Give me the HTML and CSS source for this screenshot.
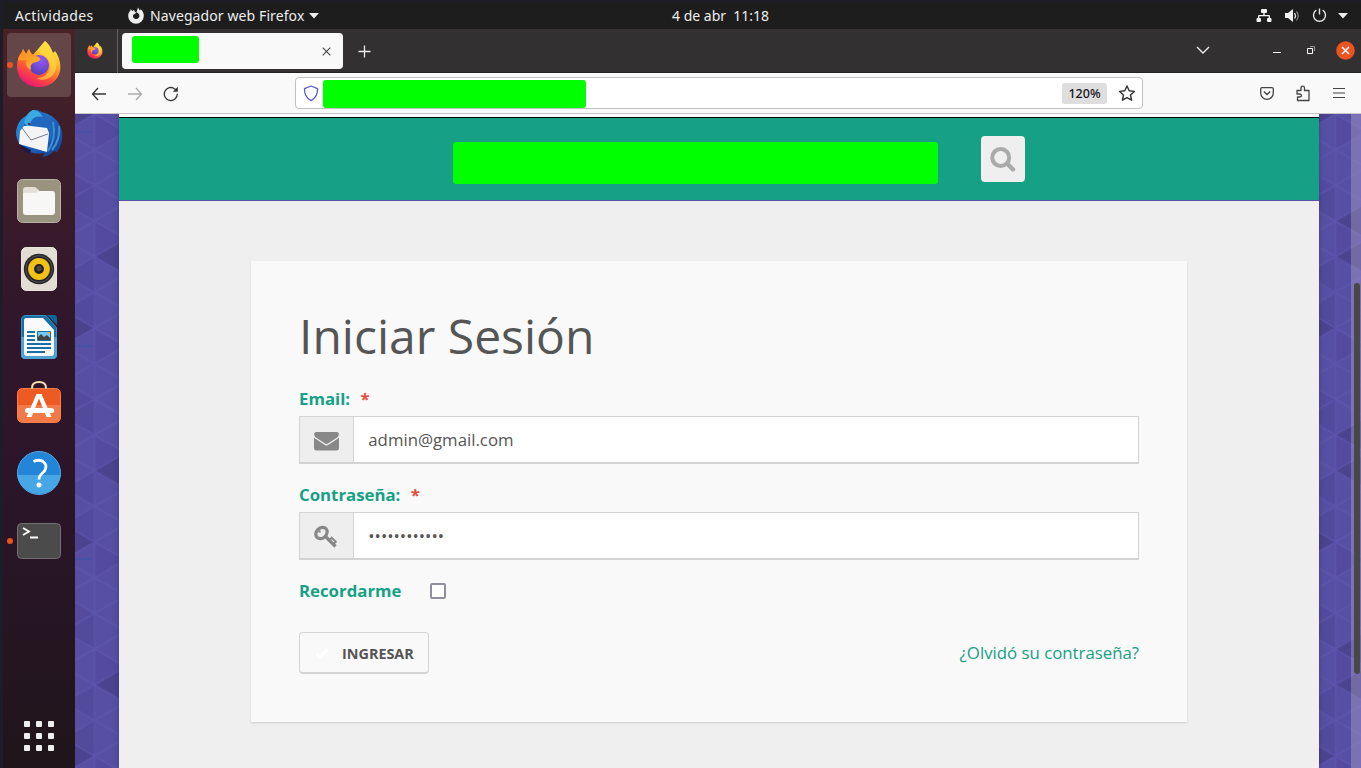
FILE: index.html
```html
<!DOCTYPE html>
<html lang="es">
<head>
<meta charset="utf-8">
<title>Iniciar Sesión</title>
<link rel="stylesheet" href="styles.css">
</head>
<body>
<svg class="defs" width="0" height="0">
  <defs>
    <linearGradient id="ff" x1=".75" y1="0" x2=".25" y2="1"><stop offset="0" stop-color="#fff24a"/><stop offset=".35" stop-color="#ffb42a"/><stop offset=".68" stop-color="#ff5038"/><stop offset="1" stop-color="#e7107c"/></linearGradient>
    <radialGradient id="globe" cx=".6" cy=".25" r=".8"><stop offset="0" stop-color="#9659f5"/><stop offset="1" stop-color="#5140b8"/></radialGradient>
    <linearGradient id="flame" x1="0" y1="0" x2="1" y2="1"><stop offset="0" stop-color="#ff8a25"/><stop offset="1" stop-color="#ffb52b"/></linearGradient>
    <linearGradient id="tb" x1="0" y1="0" x2="1" y2="1"><stop offset="0" stop-color="#2c9ae0"/><stop offset=".55" stop-color="#1d62bd"/><stop offset="1" stop-color="#173b8c"/></linearGradient>
    <symbol id="firefox" viewBox="0 0 46 48">
      <path d="M29 1C34 5 35 9 37 13l2-2c5 7 6 14 5 20-2 10-11 16-21 16C10 47 1 38 1 26c0-6 2-10 5-14l1-3 3 5 3-5 3 7z" fill="url(#ff)"/>
      <path d="M29 1c6 5 7 10 9 15 4 9 2 16-2 20-4 4-11 5-15 2 8 0 14-6 13-14-1-6-7-10-12-12 1-4 4-8 7-11z" fill="#ffdc3f" opacity=".65"/>
      <circle cx="23" cy="25" r="10" fill="url(#globe)"/>
      <path d="M2 20c0-3 2-6 4-8l1-3 3 5 3-5c1 4 4 6 7 7 2 1 4 1 4 3 0 3-5 3-7 4-2 1-3 4-2 7-5-2-6-7-4-10-4 0-7 1-9 0z" fill="url(#flame)"/>
    </symbol>
    <pattern id="grid" width="62" height="35.67" patternUnits="userSpaceOnUse">
      <path d="M31 0v35.670M0 17.830L31 0l31 17.830L31 35.670z" fill="none" stroke="#6056b3" stroke-width="1.500" opacity=".65"/>
    </pattern>
    <pattern id="tiles" width="62" height="214" patternUnits="userSpaceOnUse">
      <rect width="62" height="214" fill="#574fa3"/>
      <path d="M31 71.300L0 89.200l31 17.800zM31 142.700L0 160.500l31 17.800zM31 178.300L0 196.200 31 214z" fill="#524a9c"/>
      <path d="M31 107l31 17.800-31 17.900zM31 0l31 17.800L31 35.700zM0 53.500v35.700l31-17.900z" fill="#544ba0"/>
      <path d="M31 142.700L62 124.800v35.700zM31 0L0 17.800V0zM31 214L0 196.200V214z" fill="#4b438f"/>
    </pattern>
  </defs>
</svg>
<div class="desktop">
  <header class="topbar">
    <span class="activities">Actividades</span>
    <svg class="appmark" width="16" height="17" viewBox="0 0 16 17"><path d="M10 .5l1.800 3 1-1.300C15 4 16 6.500 15.800 9A7.800 7.800 0 0 1 .2 9c0-2.600.8-4 2-5l.5-2 1.500 2L6 3l1 2 1.500.5C8 7 5.500 6.500 5 8.500 4.700 11 6.500 12 8 12c2.500 0 3.800-2 3.300-4C10.800 6.500 9.500 6 8.500 5z" fill="#eee"/></svg>
    <span class="appname">Navegador web Firefox</span>
    <svg class="caret" width="10" height="6"><path d="M0 0h10L5 5.500z" fill="#eee"/></svg>
    <span class="clock">4 de abr&nbsp; 11:18</span>
    <div class="tray">
      <svg width="16" height="14" viewBox="0 0 16 14"><path d="M6 0h4q1 0 1 1v2q0 1-1 1H8.700v2H13q1 0 1 1v2h.5q1 0 1 1v2q0 1-1 1H12q-1 0-1-1v-2q0-1 1-1h.7V7.300H3.300V9H4q1 0 1 1v2q0 1-1 1H1.500q-1 0-1-1v-2q0-1 1-1H2V7q0-1 1-1h4.300V4H6Q5 4 5 3V1q0-1 1-1z" fill="#f2f2f2"/></svg>
      <svg width="16" height="14" viewBox="0 0 16 14"><path d="M0 4h3l5-4v13L3 9H0z" fill="#f2f2f2"/><path d="M9.500 4q2 3 0 5.500" fill="none" stroke="#ddd" stroke-width="1.300"/><path d="M11.500 2.500q3.500 4.200 0 9" fill="none" stroke="#888" stroke-width="1.200"/></svg>
      <svg width="15" height="15" viewBox="0 0 15 15"><path d="M4.300 2.200a6 6 0 1 0 6.400 0M7.500.5v6" fill="none" stroke="#e5e5e5" stroke-width="1.400"/></svg>
      <svg width="10" height="6"><path d="M0 0h10L5 5.500z" fill="#eee"/></svg>
    </div>
  </header>
  <div class="workspace">
    <nav class="dock">
      <div class="app selected"><i class="dot"></i><svg width="46" height="48"><use href="#firefox"/></svg></div>
      <div class="app mail"><svg width="48" height="48" viewBox="0 0 48 48"><path d="M18 0c5 0 7 1 8 2 11 2 19 9 21 20 1 8-1 15-5 20l-3-1c-3 3-6 5-12 6l3-4C14 46 2 37 1 24 1 14 7 7 13 5c1-2 3-4 5-5z" fill="url(#tb)"/><path d="M18 0c8 0 14 5 17 10 5 8 3 18-2 23L9 17c0-9 4-14 9-17z" fill="#1f68bd"/><path d="M18 0c-5 2-8 7-9 13l5 5c2-7 3-13 14-11-3-5-6-7-10-7z" fill="#3ba9e2"/><path d="M5 21l4-5 7 0 16 2 2 5-2 19L4 34z" fill="#f4f4f7"/><path d="M7 18l9 12 17-6" fill="none" stroke="#777b8c"/><path d="M4 34l12 6-1 4C10 42 6 38 4 34z" fill="#201846"/><path d="M38 12c2 9 1 20-5 29M44 16c1 9-2 18-7 24" stroke="#3a92d5" stroke-width="2" fill="none"/><circle cx="14" cy="14" r="1.200" fill="#6e2d33"/></svg></div>
      <div class="app"><svg width="46" height="46" viewBox="0 0 46 46"><rect x="1.500" y="1.500" width="43" height="43" rx="5" fill="#999380" stroke="#b6b2a4"/><path d="M7 12q0-3 3-3h9l4 3v8H7z" fill="#e4e0d6"/><path d="M7 15h13l3-2h13q3 0 3 3v18q0 3-3 3H10q-3 0-3-3z" fill="#f7f7f6"/></svg></div>
      <div class="app"><svg width="36" height="44" viewBox="0 0 38 46" preserveAspectRatio="none"><rect x=".5" y=".5" width="37" height="45" rx="5" fill="#e3ded4" stroke="#f0ece3"/><circle cx="19" cy="23" r="16" fill="#252529"/><circle cx="19" cy="23" r="14" fill="none" stroke="#55555c"/><circle cx="19" cy="23" r="11.500" fill="#f2c118"/><circle cx="19" cy="23" r="5.200" fill="#202022"/><circle cx="19" cy="22.500" r="2.800" fill="#46464a"/></svg></div>
      <div class="app"><svg width="38" height="46" viewBox="0 0 38 46"><path d="M6 1.500h20l10.500 12V40q0 4.500-4 4.500H6q-4.500 0-4.500-4.500V6q0-4.500 4.500-4.500z" fill="#176fa6" stroke="#3b91c2"/><path d="M1 23h36v18q0 4-4 4H5q-4 0-4-4z" fill="#4ea3d4"/><path d="M27 1h7q3 0 3 3v7z" fill="#086798"/><path d="M6 4h17l11 12v23q0 3-3 3H7q-3 0-3-3V7q0-3 2-3z" fill="#fafafa"/><path d="M7 18h8M7 22h8M7 26h8M7 30h24M7 34h24M7 38h18" stroke="#176fa6" stroke-width="2"/><path d="M17.500 17.500h13v9h-13z" fill="#76c8f5" stroke="#176fa6"/><path d="M18 26v-3l3-3 3 3 3-2 3 3v2z" fill="#444"/><path d="M28 18h2v3z" fill="#ffb321"/></svg></div>
      <div class="app store"><svg width="46" height="44" viewBox="0 0 46 44"><rect x="1.500" y="8.500" width="43" height="34" rx="5" fill="#ed5b22" stroke="#fb7f4a"/><path d="M2 25h42v13q0 4-4 4H6q-4 0-4-4z" fill="#f17a47"/><path d="M16 9V8q0-6 7-6t7 6v1" fill="none" stroke="#f5dcae" stroke-width="2"/><path d="M20.500 14h5l10 23h-5L23 18.500 15.500 37h-5z" fill="#fff"/><rect x="9" y="28" width="29" height="5" rx="2.500" fill="#fff"/></svg></div>
      <div class="app"><svg width="46" height="46" viewBox="0 0 46 46"><circle cx="23" cy="23" r="21.500" fill="#2385d8" stroke="#50a9e8"/><path d="M1.200 25h43.600a22 22 0 0 1-43.600 0z" fill="#47a6e6"/><path d="M17.500 11.500q6-2.500 9.500 0 4 3 2.500 7.500-.8 2.500-3.500 4.500-3 2.300-3 6" fill="none" stroke="#fff" stroke-width="2.800"/><circle cx="23" cy="35" r="2.500" fill="#fff"/></svg></div>
      <div class="app"><i class="dot"></i><svg width="46" height="38" viewBox="0 0 46 38"><rect x="1.500" y="1.500" width="43" height="35" rx="4" fill="#4b4b4b" stroke="#717171"/><path d="M7 6l6 3.500L7 13M14 15.500h8" fill="none" stroke="#fff" stroke-width="1.800"/></svg></div>
      <div class="launcher"><i></i><i></i><i></i><i></i><i></i><i></i><i></i><i></i><i></i></div>
    </nav>
    <section class="browser">
      <div class="tabs">
        <div class="pinned"><svg width="16" height="17"><use href="#firefox"/></svg></div>
        <div class="tab"><b class="mask tab-mask"></b><svg width="9" height="9"><path d="M.7.7l7.600 7.600M8.300.7L.7 8.300" stroke="#444" stroke-width="1.100"/></svg></div>
        <svg class="newtab" width="13" height="13"><path d="M6.500.5v12M.5 6.500h12" stroke="#eee" stroke-width="1.300"/></svg>
        <div class="window-tools">
          <svg class="chev" width="14" height="9"><path d="M1 1l6 6 6-6" fill="none" stroke="#eee" stroke-width="1.400"/></svg>
          <svg class="min" width="8" height="2"><path d="M0 .5h8" stroke="#fff"/></svg>
          <svg class="max" width="9" height="9"><path d="M3 .5h4.500V5" fill="none" stroke="#999"/><path d="M.5 2.500h5v5h-5z" fill="none" stroke="#fff"/></svg>
          <svg width="19" height="19"><circle cx="9.500" cy="9.500" r="9.300" fill="#e95420"/><path d="M6 6l7 7M13 6l-7 7" stroke="#fff" stroke-width="1.500"/></svg>
        </div>
      </div>
      <div class="toolbar">
        <div class="navicons">
          <svg width="16" height="14"><path d="M15 7H1.500M7 1L1.500 7 7 13" fill="none" stroke="#333" stroke-width="1.300"/></svg>
          <svg width="16" height="14"><path d="M1 7h13.500M9 1l5.500 6L9 13" fill="none" stroke="#aaa" stroke-width="1.300"/></svg>
          <svg width="16" height="16"><path d="M14.300 7.800a6.500 6.500 0 1 1-2.500-4.900L13.500 4.300" fill="none" stroke="#333" stroke-width="1.300"/><path d="M14.800.7v5h-5z" fill="#333"/></svg>
        </div>
        <div class="address">
          <svg width="16" height="17"><path d="M8 1l6.500 2.600q.6 8-6.500 12Q.9 11.600 1.500 3.600z" fill="none" stroke="#5a5bd0" stroke-width="1.300" stroke-linejoin="round"/></svg>
          <b class="mask url-mask"></b>
          <span class="zoom">120%</span>
          <svg width="17" height="17" viewBox="0 0 17 17"><path d="M8 1l2.200 4.800 5.200.6-3.900 3.600 1.100 5.200L8 12.600l-4.600 2.600L4.500 10 .6 6.400l5.200-.6z" fill="none" stroke="#333" stroke-width="1.400" stroke-linejoin="round"/></svg>
        </div>
        <div class="menuicons">
          <svg width="14" height="13"><path d="M2 .7h10q1.300 0 1.300 1.300v4a6.300 6.300 0 0 1-12.600 0V2Q.7.7 2 .7zM3.800 4.500L7 7.500l3.200-3" fill="none" stroke="#444" stroke-width="1.300"/></svg>
          <svg width="15" height="17"><path d="M1 5.500h4V3q0-1.800 1.700-1.800T8.500 3v2.500H13v10H1.500V12h2q2-.3 2-1.500t-2-1.500H1z" fill="none" stroke="#444" stroke-width="1.300" stroke-linejoin="round"/></svg>
          <svg width="12" height="11"><path d="M0 .5h12M0 5h12M0 9.500h12" stroke="#444" stroke-width="1.200"/></svg>
        </div>
      </div>
      <div class="viewport">
        <div class="edge left"><svg width="44" height="654"><g transform="translate(-11.500 0)"><rect x="11" width="45" height="654" fill="url(#tiles)"/><rect x="11" width="45" height="654" fill="url(#grid)"/></g><path class="speck" d="M1 18h16M1 232h16M1 445h16"/></svg></div>
        <main class="page">
          <div class="strip"></div>
          <div class="banner"><b class="mask title-mask"></b><button class="search" aria-label="Buscar"><svg width="26" height="26"><circle cx="10.700" cy="10.500" r="8.500" fill="none" stroke="#aaa" stroke-width="4"/><path d="M17.500 17l5.500 5.500" stroke="#aaa" stroke-width="4.400" stroke-linecap="round"/></svg></button></div>
          <form class="card">
            <h1>Iniciar Sesión</h1>
            <label>Email: <em>*</em></label>
            <div class="field"><span class="addon"><svg width="25" height="19" viewBox="0 0 25 20" preserveAspectRatio="none"><path d="M2.500 0h20Q25 0 25 2.500 24.500 5 22 6.500l-8 5.500q-1.500 1-3 0L3 6.500Q.5 5 0 2.500 0 0 2.500 0z" fill="#888"/><path d="M0 6l10.500 7.500q2 1.400 4 0L25 6v11q0 2.500-2.500 2.500h-20Q0 19.500 0 17z" fill="#888"/></svg></span><span class="value">admin@gmail.com</span></div>
            <label>Contraseña: <em>*</em></label>
            <div class="field"><span class="addon"><svg width="25" height="24"><ellipse cx="7.500" cy="8" rx="6.300" ry="5" transform="rotate(-45 7.500 8)" fill="none" stroke="#888" stroke-width="3.200"/><path d="M11 11l10.500 10.500" fill="none" stroke="#888" stroke-width="3.200"/><path d="M15 15.500l3-3M19 19.500l3-3M17 12l5.500 5.500" fill="none" stroke="#888" stroke-width="1.800"/><circle cx="5.500" cy="6.500" r="1.300" fill="#888"/></svg></span><span class="value">••••••••••••</span></div>
            <div class="remember"><span>Recordarme</span><i class="check"></i></div>
            <div class="actions"><button class="submit" type="button"><svg width="14" height="11"><path d="M1.500 5.500l3.500 3.500L12.500 1.500" fill="none" stroke="#fff" stroke-width="3"/></svg>INGRESAR</button><a>¿Olvidó su contraseña?</a></div>
          </form>
        </main>
        <div class="edge right"><svg width="42" height="654"><g transform="translate(-14.500 0)"><rect x="14" width="43" height="654" fill="url(#tiles)"/><path d="M31 107l31-18v36zM31 321l31-18v36zM31 535l31-18v36z" fill="#4b438f"/><rect x="14" width="43" height="654" fill="url(#grid)"/></g></svg><div class="scroll"><i></i></div></div>
      </div>
    </section>
  </div>
</div>
</body>
</html>
```
FILE: styles.css
```css
* { box-sizing: border-box; }
body { margin: 0; overflow: hidden; font-family: "Open Sans", sans-serif; }
svg { display: block; flex: none; }
.defs { position: absolute; }
.desktop { display: flex; flex-direction: column; width: 1361px; height: 768px; padding: 2px 0 0 3px; background: #1d1d29; }
.topbar { display: flex; align-items: center; height: 27px; flex: none; background: #1d1d1d; color: #eee; font: 14px/27px "Noto Sans", sans-serif; padding-left: 12px; white-space: nowrap; }
.activities { width: 113px; letter-spacing: .35px; }
.appmark { margin-right: 6px; }
.appname { width: 155px; letter-spacing: .1px; }
.caret { margin-left: 4px; }
.clock { margin-left: 353px; width: 98px; }
.tray { display: flex; align-items: center; gap: 11px; margin-left: auto; margin-right: 13px; }
.tray svg:first-child { margin-right: 2px; }
.workspace { display: flex; flex: 1; min-height: 0; }
.dock { width: 72px; flex: none; display: flex; flex-direction: column; align-items: center; gap: 4px; padding-top: 4px; background: linear-gradient(#492228 0, #3d1d2a 120px, #32172b 270px, #2c152a 430px, #20151b 100%); }
.app { width: 64px; height: 64px; display: flex; align-items: center; justify-content: center; border-radius: 4px; position: relative; }
.selected { background: #644548; padding-bottom: 2px; }
.mail { padding-top: 2px; }
.store { padding-bottom: 6px; }
.dot { position: absolute; width: 6px; height: 6px; border-radius: 50%; background: #e95420; left: 0; top: 29px; }
.launcher { display: grid; grid-template-columns: repeat(3, 6px); gap: 6px; margin-top: auto; margin-bottom: 17px; }
.launcher i { width: 6px; height: 6px; border-radius: 1px; background: #f0eeee; }
.browser { flex: 1; min-width: 0; display: flex; flex-direction: column; }
.tabs { height: 44px; flex: none; display: flex; align-items: center; background: #323031; border-bottom: 1px solid #242223; }
.pinned { width: 43px; height: 44px; border-right: 1px solid #626061; display: flex; align-items: center; padding-left: 12px; }
.tab { display: flex; align-items: center; justify-content: space-between; width: 221px; height: 36px; margin-left: 4px; padding: 0 12px 0 10px; background: #f9f9fa; border-radius: 4px; }
.tab svg { margin-top: 1px; }
.mask { background: #0f0; border-radius: 3px; flex: none; }
.tab-mask { width: 67px; height: 27px; margin-bottom: 2px; }
.newtab { margin: 1px 0 0 15px; }
.window-tools { display: flex; align-items: center; margin: 0 6px 0 auto; }
.chev { margin-right: 63px; }
.min { margin: 5px 26px 0 0; }
.max { margin-right: 20px; }
.toolbar { height: 41px; flex: none; display: flex; align-items: center; background: #f9f9fa; border-bottom: 1px solid #c7c7c7; }
.navicons { display: flex; align-items: center; gap: 20px; width: 220px; padding: 1px 0 0 16px; }
.address { display: flex; align-items: center; width: 848px; height: 32px; border: 1px solid #c0c0c0; border-radius: 4px; background: #fff; padding: 0 6px 0 7px; }
.url-mask { width: 263px; height: 28px; margin: 2px 0 0 4px; }
.zoom { margin-left: auto; margin-right: 12px; width: 45px; height: 21px; border-radius: 3px; background: #dedede; color: #15141a; font: 500 12.500px/21px "Noto Sans", sans-serif; text-align: center; }
.menuicons { display: flex; align-items: center; gap: 22px; margin-left: auto; margin-right: 16px; }
.viewport { flex: 1; min-height: 0; display: flex; background: #574fa3; overflow: hidden; }
.edge { flex: none; position: relative; overflow: hidden; }
.left { width: 44px; }
.right { width: 42px; }
.speck { stroke: #3558ae; stroke-width: 2; stroke-dasharray: 5 1; opacity: .55; }
.scroll { position: absolute; top: 0; right: 0; width: 10px; height: 654px; background: rgba(190, 180, 205, .35); }
.scroll i { display: block; width: 6px; height: 391px; margin: 169px 0 0 3px; border-radius: 3px; background: #474747; }
.page { flex: 1; background: #efefef; display: flex; flex-direction: column; align-items: center; min-width: 0; box-shadow: 0 0 5px rgba(40, 30, 90, .4); position: relative; z-index: 1; }
.strip { width: 100%; height: 3px; background: #fbfbfb; flex: none; }
.banner { width: 100%; height: 84px; flex: none; background: #16a085; border-top: 1px solid #000; border-bottom: 1px solid #5850a5; display: flex; align-items: flex-start; padding: 18px 0 0 334px; }
.title-mask { width: 485px; height: 42px; margin-top: 6px; }
.search { width: 44px; height: 46px; margin-left: 43px; border: 0; border-radius: 4px; background: #efefef; padding: 1px 0 0 9px; }
.card { width: 936px; height: 461px; flex: none; margin-top: 60px; padding: 39px 48px 0; background: #f9f9f9; box-shadow: 0 1px 2px rgba(0, 0, 0, .15); color: #555; font-size: 16.800px; }
h1 { margin: 0 0 15px; font-size: 48px; line-height: 72px; font-weight: 400; }
label { display: block; height: 29px; line-height: 24px; color: #16a085; font-weight: 700; }
em { font-style: normal; color: #e74c3c; margin-left: 6px; }
.field { display: flex; width: 840px; height: 48px; margin-bottom: 19px; border: 1px solid #d3d3d3; border-bottom-width: 2px; background: #fff; }
.addon { width: 54px; background: #eee; border-right: 1px solid #d3d3d3; display: flex; align-items: center; justify-content: center; padding-top: 3px; }
.value { padding-left: 14.300px; line-height: 46px; }
.remember { display: flex; align-items: center; height: 24px; margin-top: -1px; color: #16a085; font-weight: 700; }
.remember span { width: 131px; }
.check { width: 16px; height: 16px; margin-top: 1px; border: 2px solid #8f8f9d; border-radius: 2px; background: #fff; }
.actions { display: flex; align-items: center; justify-content: space-between; margin-top: 30px; }
.actions a { color: #16a085; margin-bottom: 2px; }
.submit { display: flex; align-items: center; gap: 13px; width: 130px; height: 42px; border: 1px solid #d5d5d5; border-bottom-width: 2px; border-radius: 4px; background: #f9f9f9; color: #555; padding: 2px 0 0 15px; font: 700 14.400px "Open Sans", sans-serif; }
```
